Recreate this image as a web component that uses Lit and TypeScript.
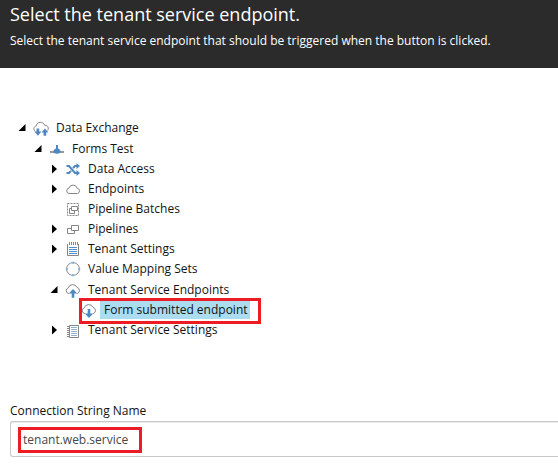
import { LitElement, html, css, svg, nothing } from "lit";
import { customElement, property, state } from "lit/decorators.js";
import { classMap } from "lit/directives/class-map.js";

interface TreeItem {
  name: string;
  icon: string;
  open?: boolean;
  leaf?: boolean;
  selected?: boolean;
  children?: TreeItem[];
}

const CLOUD = "M4 11.5H3.6A2.9 2.9 0 0 1 3.2 5.9A4.7 4.7 0 0 1 12 5.4A3.2 3.2 0 0 1 12.4 11.5H12";

const ICONS: Record<string, unknown> = {
  exchange: svg`
    <path class="line" d="M2.4 11.5C.2 10 .4 6.6 3.2 6C3.6 1.4 10.4 1 11.8 5.3C15 5 16.2 8.6 14.6 10.5" />
    <path class="fill" d="M3.6 8.5H6.2V11.5H8.4L4.9 15.8L1.4 11.5H3.6Z" />
    <path class="fill" d="M10.6 15.8H13.2V12.6H15.4L11.9 8.4L8.4 12.6H10.6Z" />`,
  tenant: svg`
    <path class="bar" d="M1 11H5M11 11H15" />
    <path class="fill" d="M7 4H9V7.6C10.5 8 11.6 9.2 11.6 10.6C11.6 12 10 12.8 8 12.8S4.4 12 4.4 10.6C4.4 9.2 5.5 8 7 7.6Z" />`,
  access: svg`
    <path class="wire" d="M1.5 5H4L10 12H12.5M1.5 12H4L6 9.8M8 7.2L10 5H12.5" />
    <path class="fill" d="M11.5 2L15 5L11.5 8ZM11.5 9L15 12L11.5 15Z" />`,
  cloud: svg`<path class="line" d="M4 12.5H12.4A2.7 2.7 0 0 0 12.2 7.2A4.3 4.3 0 0 0 4 7A2.8 2.8 0 0 0 4 12.5Z" />`,
  batches: svg`
    <path class="dash" d="M2.5 2.5H13.5V14.5H2.5Z" />
    <path class="line" d="M6.5 5.5H12.5V9.5H6.5ZM6.5 7.5H4.5V12.5H9.5V9.5" />`,
  pipelines: svg`<path class="line" d="M6.5 4.5H13.5V9.5H6.5ZM6.5 7.5H2.5V12.5H9.5V9.5" />`,
  settings: svg`
    <path class="line" d="M2.5 3V14.5H13.5V3" />
    <path class="line" d="M4.5 1V4M6.5 1V4M8.5 1V4M10.5 1V4M12.5 1V4" />
    <path class="blue" d="M4 6.5H12M4 8.5H12M4 10.5H12M4 12.5H12" />`,
  mapping: svg`
    <circle class="line" cx="8" cy="8" r="6.4" />
    <path class="dot" d="M7 .8H9V2.8H7ZM7 13.2H9V15.2H7ZM.8 7H2.8V9H.8ZM13.2 7H15.2V9H13.2Z" />`,
  upload: svg`
    <path class="line" d="${CLOUD}" />
    <path class="fill" d="M8 7L12.2 11.5H9.3V15.8H6.7V11.5H3.8Z" />`,
  download: svg`
    <path class="line" d="${CLOUD}" />
    <path class="fill" d="M6.7 7H9.3V11.5H12.2L8 16L3.8 11.5H6.7Z" />`,
  ledger: svg`
    <path class="line" d="M4.5 3.5H13.5V15.5H4.5Z" />
    <path class="line" d="M2 4.5H5M2 6.5H5M2 8.5H5M2 10.5H5M2 12.5H5M2 14.5H5" />
    <path class="grey" d="M6 5.5H12M6 7.5H12M6 9.5H12M6 11.5H12M6 13.5H12" />`,
};

const TREE: TreeItem[] = [
  {
    name: "Data Exchange", icon: "exchange", open: true, children: [
      {
        name: "Forms Test", icon: "tenant", open: true, children: [
          { name: "Data Access", icon: "access" },
          { name: "Endpoints", icon: "cloud" },
          { name: "Pipeline Batches", icon: "batches", leaf: true },
          { name: "Pipelines", icon: "pipelines" },
          { name: "Tenant Settings", icon: "settings" },
          { name: "Value Mapping Sets", icon: "mapping", leaf: true },
          {
            name: "Tenant Service Endpoints", icon: "upload", open: true, children: [
              { name: "Form submitted endpoint", icon: "download", leaf: true, selected: true },
            ],
          },
          { name: "Tenant Service Settings", icon: "ledger" },
        ],
      },
    ],
  },
];

@customElement("tree-node")
class TreeNode extends LitElement {
  @property({ attribute: false }) item!: TreeItem;
  @state() private open = false;

  static styles = css`
    :host { display: block; }
    .row { display: flex; align-items: center; height: 20px; position: relative; width: max-content; }
    .row.open { padding-top: 1px; }
    .toggle, .name { border: 0; background: none; font: inherit; color: inherit; cursor: pointer; }
    .toggle { display: flex; align-items: center; width: 15px; height: 16px; padding: 0; }
    .arrow { width: 8px; height: 10px; }
    .icon { flex: none; width: 16px; height: 16px; margin-right: 3px; }
    .name { padding: 0 4px; line-height: 18px; white-space: nowrap; }
    .selected .name { background: #abdcf0; padding-right: 2px; }
    .kids { padding-left: 16px; }
    .mark { position: absolute; inset: -2px -11px -4px 13px; border: 3px solid #ed1c24; pointer-events: none; }
    .line { fill: none; stroke: #858585; }
    .bar { stroke: #999; stroke-width: 2; }
    .dash { fill: none; stroke: #858585; stroke-dasharray: 2 1; }
    .wire { fill: none; stroke: #4f87c0; stroke-width: 2; }
    .fill { fill: #4f87c0; }
    .blue { stroke: #4f8fcf; }
    .grey { stroke: #8fb0cf; }
    .dot { fill: #7fb2e0; }
  `;

  connectedCallback() {
    super.connectedCallback();
    this.open = !!this.item.open;
  }

  render() {
    const { name, icon, leaf, selected, children } = this.item;
    return html`
      <div class=${classMap({ row: true, selected: !!selected, open: this.open })}>
        ${leaf
          ? html`<span class="toggle"></span>`
          : html`<button class="toggle" aria-label="Toggle ${name}" aria-expanded=${this.open}
              @click=${() => (this.open = !this.open)}>
              <svg class="arrow" viewBox="0 0 8 10">
                <path d=${this.open ? "M7.5 1V8H.5Z" : "M2 .5L7 5L2 9.5Z"} />
              </svg>
            </button>`}
        <svg class="icon" viewBox="0 0 16 16" aria-hidden="true">${ICONS[icon]}</svg>
        <button class="name">${name}</button>
        ${selected ? html`<span class="mark"></span>` : nothing}
      </div>
      ${this.open && children
        ? html`<div class="kids">${children.map((c) => html`<tree-node .item=${c}></tree-node>`)}</div>`
        : nothing}
    `;
  }
}

@customElement("app-root")
class AppRoot extends LitElement {
  static styles = css`
    :host { display: block; overflow: hidden; background: #fff; color: #131313; font: 12px/18px "Open Sans", "Noto Sans", sans-serif; }
    header { background: #2b2b2b; color: #fff; padding: 0 10px 18px; }
    h1 { margin: 0; font-size: 18px; font-weight: 400; line-height: 28px; }
    p { margin: 0; padding-top: 4px; }
    .tree { padding: 49px 18px 0; }
    .field { padding: 62px 0 14px 10px; }
    label { display: block; padding-bottom: 1px; }
    .box { position: relative; display: flex; }
    input { flex: 1; min-width: 0; height: 36px; margin: 0; box-sizing: border-box; padding: 0 12px; border: 1px solid #c8c8c8; border-right: 0; border-radius: 3px 0 0 3px; box-shadow: inset 0 1px 0 #ececec; font: inherit; color: #474747; outline: 0; }
    .mark { position: absolute; left: 8px; top: 6px; width: 124px; height: 26px; box-sizing: border-box; border: 3px solid #ed1c24; pointer-events: none; }
  `;

  render() {
    return html`
      <header>
        <h1>Select the tenant service endpoint.</h1>
        <p>Select the tenant service endpoint that should be triggered when the button is clicked.</p>
      </header>
      <main>
        <div class="tree">${TREE.map((t) => html`<tree-node .item=${t}></tree-node>`)}</div>
        <div class="field">
          <label for="connection">Connection String Name</label>
          <div class="box">
            <input id="connection" type="text" value="tenant.web.service" />
            <span class="mark"></span>
          </div>
        </div>
      </main>
    `;
  }
}
